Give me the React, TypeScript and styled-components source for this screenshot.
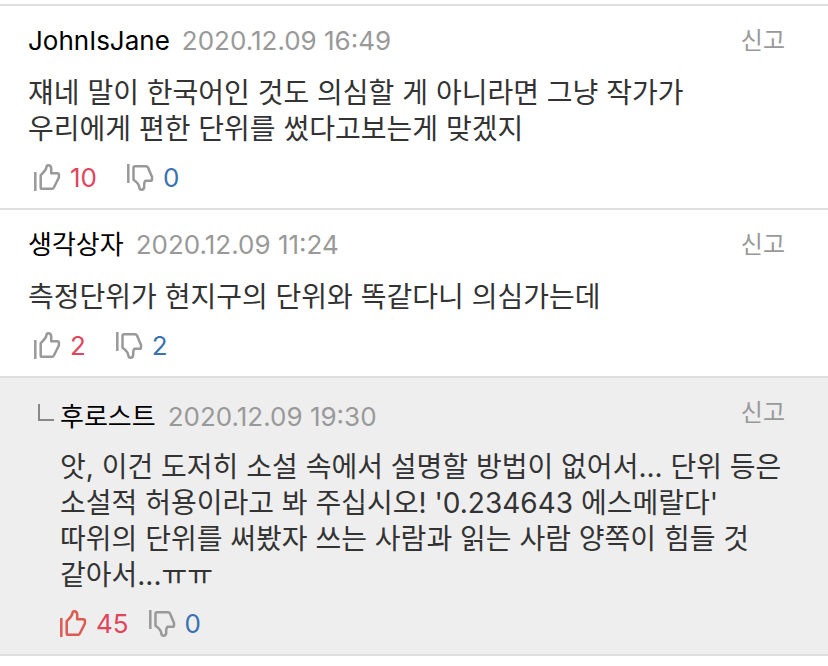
import React from "react";
import styled, { createGlobalStyle } from "styled-components";

const GlobalStyle = createGlobalStyle`
  * { box-sizing: border-box; }
  body {
    margin: 0;
    background: #fff;
    color: #333;
    font-family: Inter, "Noto Sans CJK KR", sans-serif;
  }
`;

const List = styled.ul`
  list-style: none;
  margin: 4px 0 0;
  padding: 0;
  border-bottom: 2px solid #dfdfdf;
`;

const Item = styled.li<{ $reply?: boolean }>`
  padding: 17px 40px 12px ${(p) => (p.$reply ? 60 : 28)}px;
  border-top: 2px solid #dfdfdf;
  background: ${(p) => (p.$reply ? "#eee" : "#fff")};
`;

const Header = styled.header<{ $reply?: boolean }>`
  display: flex;
  align-items: flex-start;
  justify-content: space-between;
  height: ${(p) => (p.$reply ? 54 : 52)}px;
  padding-right: 3px;
`;

const Meta = styled.div<{ $reply?: boolean }>`
  display: flex;
  align-items: center;
  gap: 12px;
  margin-top: ${(p) => (p.$reply ? 4 : 0)}px;
  margin-left: ${(p) => (p.$reply ? -22 : 0)}px;
  font-size: 26px;
  line-height: 36px;
`;

const Author = styled.span`
  display: flex;
  align-items: center;
  gap: 6px;
  color: #000;
  font-weight: 400;
`;

const Corner = styled.svg`
  display: block;
  width: 16px;
  height: 18px;
  margin-bottom: 8px;
`;

const Time = styled.time`
  color: #999;
`;

const Report = styled.button`
  border: 0;
  padding: 0;
  background: none;
  color: #999;
  font: inherit;
  font-size: 24px;
  line-height: 36px;
  cursor: pointer;
`;

const Body = styled.p`
  margin: 0;
  font-size: 28px;
  line-height: 36px;
  word-break: keep-all;
`;

const Votes = styled.div<{ $reply?: boolean }>`
  display: flex;
  gap: ${(p) => (p.$reply ? 20 : 30)}px;
  margin-top: 13px;
  padding-left: ${(p) => (p.$reply ? 0 : 6)}px;
`;

const VoteButton = styled.button<{ $down?: boolean }>`
  display: flex;
  align-items: center;
  gap: 9px;
  border: 0;
  padding: 0;
  background: none;
  color: ${(p) => (p.$down ? "#3a72b0" : "#e2445c")};
  font: inherit;
  font-size: 26px;
  line-height: 36px;
  cursor: pointer;
`;

const Icon = styled.svg<{ $active?: boolean }>`
  display: block;
  width: 27px;
  height: 27px;
  margin-bottom: 2px;
  fill: none;
  stroke: ${(p) => (p.$active ? "#dc5a50" : "#999")};
  stroke-width: 2.5;
  stroke-linejoin: round;
`;

const ThumbUp = ({ active }: { active?: boolean }) => (
  <Icon viewBox="0 0 27 27" $active={active} aria-hidden="true">
    <path d="M1.3 8V27" />
    <path d="M6.7 11.2V23.2Q6.7 24.8 8.3 24.8H18.2Q19.2 24.8 19.7 23.8L24.9 13.5V10.8Q24.9 9.2 23.3 9.2H17.2V4.2Q16.8 1.3 14.2 1.3Q12.7 1.3 12.5 3C12.2 6 10.5 7.5 6.7 11.2Z" />
  </Icon>
);

const ThumbDown = () => (
  <Icon viewBox="0 0 27 27" aria-hidden="true">
    <path d="M1.3 0V19" />
    <path d="M6.5 15.8V3.8Q6.5 2.2 8.1 2.2H19Q20.4 2.2 21 3.5L25 13V15.2Q25 16.8 23.4 16.8H18.4Q17.2 18.5 17.2 20.2V22.8Q17 25.7 14.6 25.7Q12.6 25.7 12.4 23.6C12.2 20.5 10.8 18.8 6.5 15.8Z" />
  </Icon>
);

interface Comment {
  author: string;
  time: string;
  text: string;
  up: number;
  down: number;
  reply?: boolean;
  liked?: boolean;
}

const comments: Comment[] = [
  {
    author: "JohnIsJane",
    time: "2020.12.09 16:49",
    text: "쟤네 말이 한국어인 것도 의심할 게 아니라면 그냥 작가가 우리에게 편한 단위를 썼다고보는게 맞겠지",
    up: 10,
    down: 0,
  },
  {
    author: "생각상자",
    time: "2020.12.09 11:24",
    text: "측정단위가 현지구의 단위와 똑같다니 의심가는데",
    up: 2,
    down: 2,
  },
  {
    author: "후로스트",
    time: "2020.12.09 19:30",
    text: "앗, 이건 도저히 소설 속에서 설명할 방법이 없어서... 단위 등은 소설적 허용이라고 봐 주십시오! '0.234643 에스메랄다' 따위의 단위를 써봤자 쓰는 사람과 읽는 사람 양쪽이 힘들 것 같아서...ㅠㅠ",
    up: 45,
    down: 0,
    reply: true,
    liked: true,
  },
];

export default function App() {
  return (
    <>
      <GlobalStyle />
      <List>
        {comments.map((c) => (
          <Item key={c.author} $reply={c.reply}>
            <Header $reply={c.reply}>
              <Meta $reply={c.reply}>
                <Author>
                  {c.reply && (
                    <Corner viewBox="0 0 16 18" aria-hidden="true">
                      <path d="M1 0V16H16" fill="none" stroke="#888" strokeWidth="2" />
                    </Corner>
                  )}
                  {c.author}
                </Author>
                <Time>{c.time}</Time>
              </Meta>
              <Report type="button">신고</Report>
            </Header>
            <Body>{c.text}</Body>
            <Votes $reply={c.reply}>
              <VoteButton type="button" aria-label={`좋아요 ${c.up}`}>
                <ThumbUp active={c.liked} />
                {c.up}
              </VoteButton>
              <VoteButton type="button" $down aria-label={`싫어요 ${c.down}`}>
                <ThumbDown />
                {c.down}
              </VoteButton>
            </Votes>
          </Item>
        ))}
      </List>
    </>
  );
}
